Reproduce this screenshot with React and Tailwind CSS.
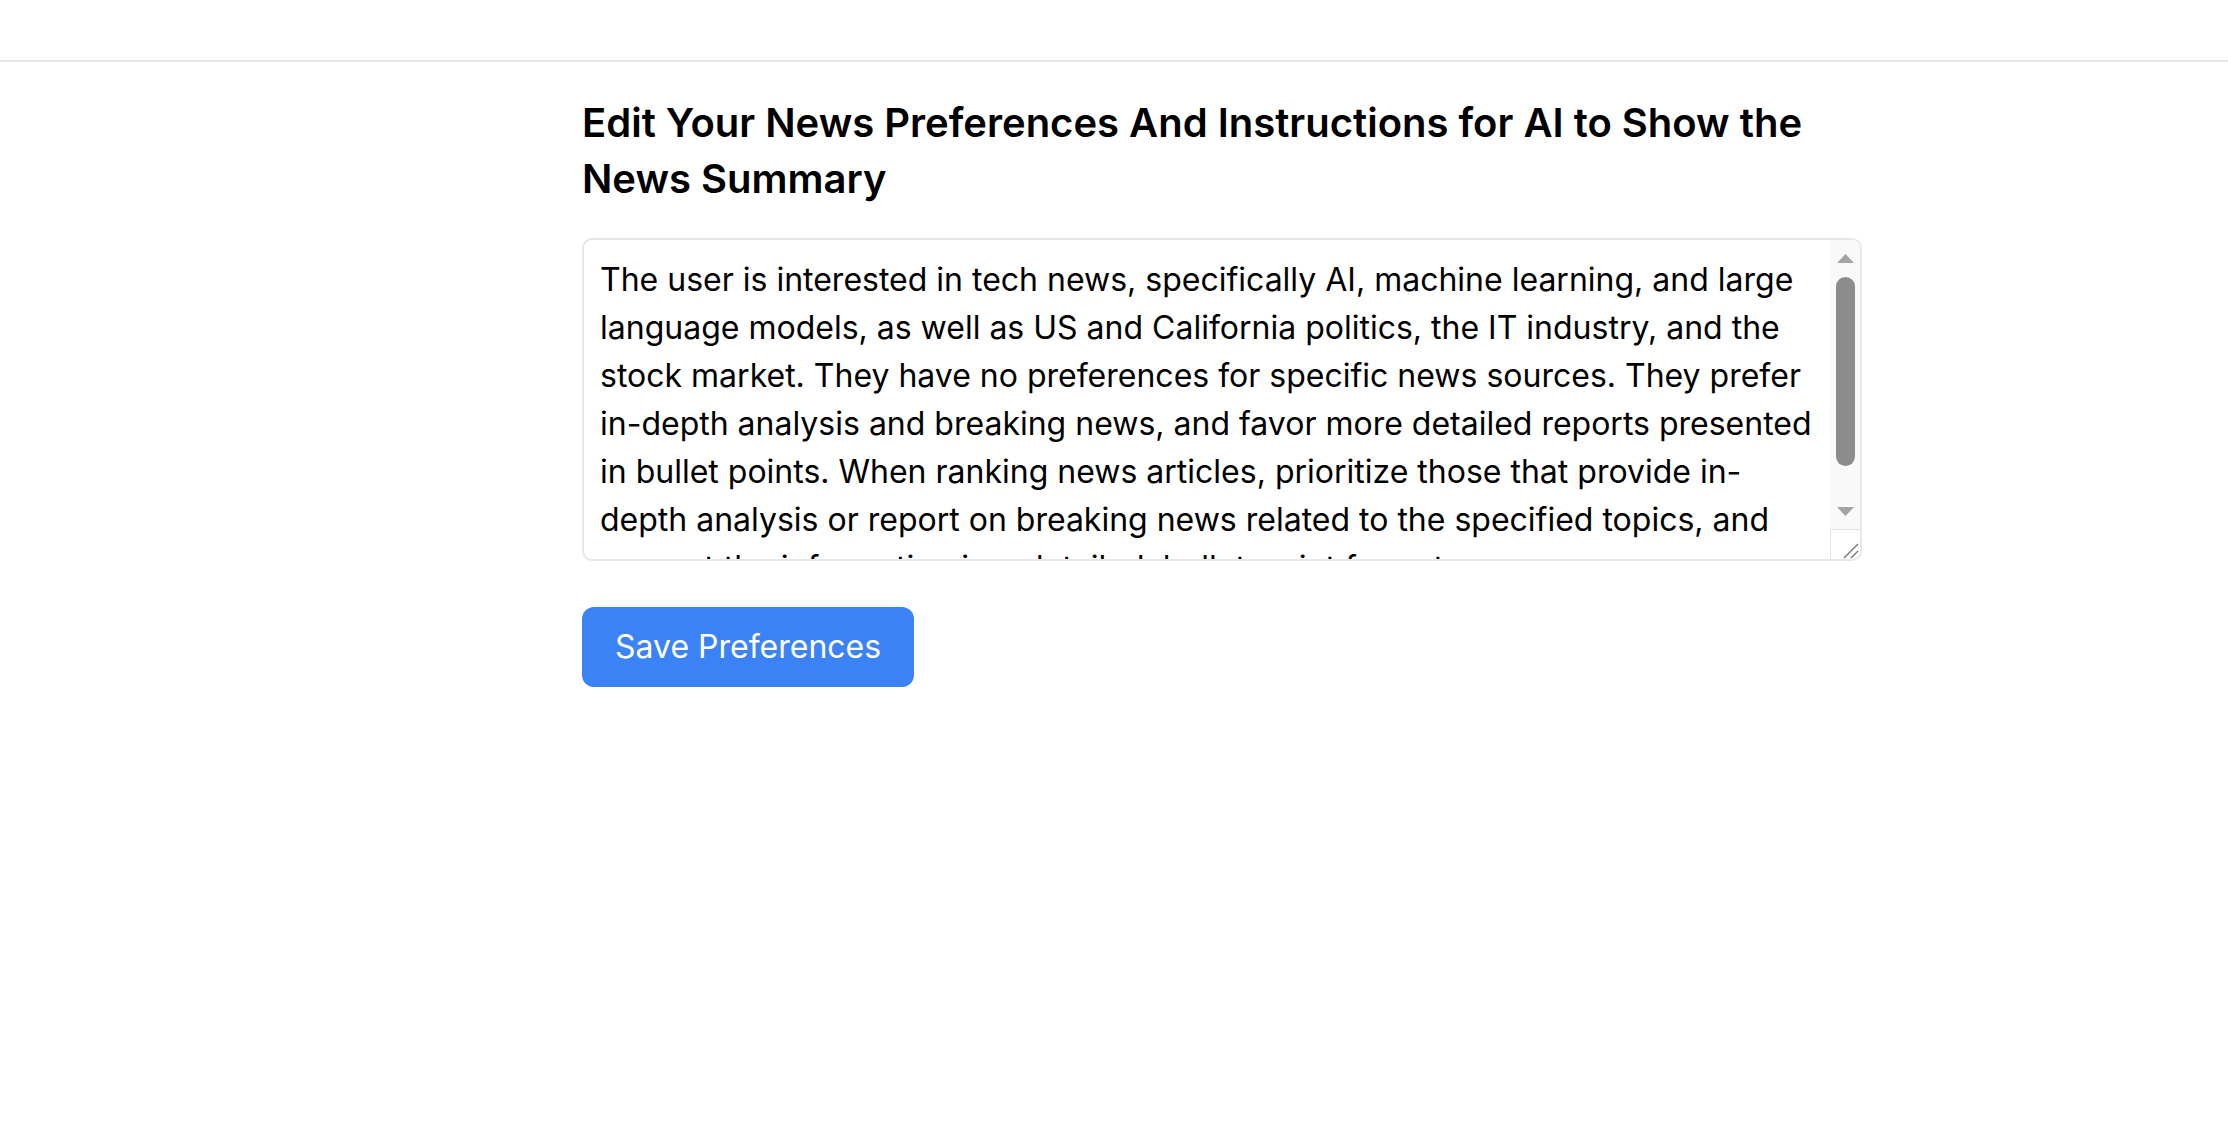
import { useState } from "react";

const initialPrefs =
  "The user is interested in tech news, specifically AI, machine learning, and large language models, as well as US and California politics, the IT industry, and the stock market. They have no preferences for specific news sources. They prefer in-depth analysis and breaking news, and favor more detailed reports presented in bullet points. When ranking news articles, prioritize those that provide in-depth analysis or report on breaking news related to the specified topics, and present the information in a detailed, bullet-point format.";

// decorative scrollbar, drawn over the textarea's right edge
function FakeScrollbar() {
  return (
    <div
      aria-hidden="true"
      className="pointer-events-none absolute top-[2px] right-[2px] bottom-[2px] w-[30px] flex flex-col bg-[#f9f9f9] rounded-r-[8px] overflow-hidden"
    >
      <div className="h-[36px] flex items-center justify-center">
        <svg width="17" height="9" viewBox="0 0 17 9">
          <polygon points="8.5,0 17,9 0,9" fill="#a3a3a3" />
        </svg>
      </div>
      <div className="mt-[1px] mx-auto h-[189px] w-[19px] rounded-full bg-[#8c8c8c]" />
      <div className="flex-1" />
      <div className="h-[36px] flex items-center justify-center">
        <svg width="17" height="9" viewBox="0 0 17 9">
          <polygon points="0,0 17,0 8.5,9" fill="#a3a3a3" />
        </svg>
      </div>
      <div className="h-[30px] border-t border-l border-[#e3e3e3] bg-white">
        <svg width="29" height="29" viewBox="0 0 29 29">
          <line x1="27" y1="14" x2="13" y2="28" stroke="#7a7a7a" strokeWidth="1.5" />
          <line x1="27" y1="21" x2="20" y2="28" stroke="#7a7a7a" strokeWidth="1.5" />
        </svg>
      </div>
    </div>
  );
}

export default function App() {
  const [prefs, setPrefs] = useState(initialPrefs);

  return (
    <div className="min-h-screen bg-white text-black" style={{ fontFamily: "Inter, 'Noto Sans', sans-serif" }}>
      {/* top bar */}
      <header className="h-[62px] border-b-2 border-[#e5e7eb]" />

      <main className="ml-[582px] w-[1280px] pt-[33px]">
        <h1 className="text-[40px] leading-[56px] font-semibold">
          Edit Your News Preferences And Instructions for AI to Show the News Summary
        </h1>

        <div className="relative mt-[31px]">
          <textarea
            value={prefs}
            onChange={(e) => setPrefs(e.target.value)}
            className="block w-full h-[323px] resize-none rounded-[10px] border-2 border-[#e5e7eb] pl-[16px] pr-[46px] py-[16px] text-[32px] leading-[48px] text-black outline-none"
          />
          <FakeScrollbar />
        </div>

        <button className="mt-[46px] block h-[80px] px-[33px] rounded-[12px] bg-[#3b82f6] text-white text-[32px] leading-none">
          Save Preferences
        </button>
      </main>
    </div>
  );
}
